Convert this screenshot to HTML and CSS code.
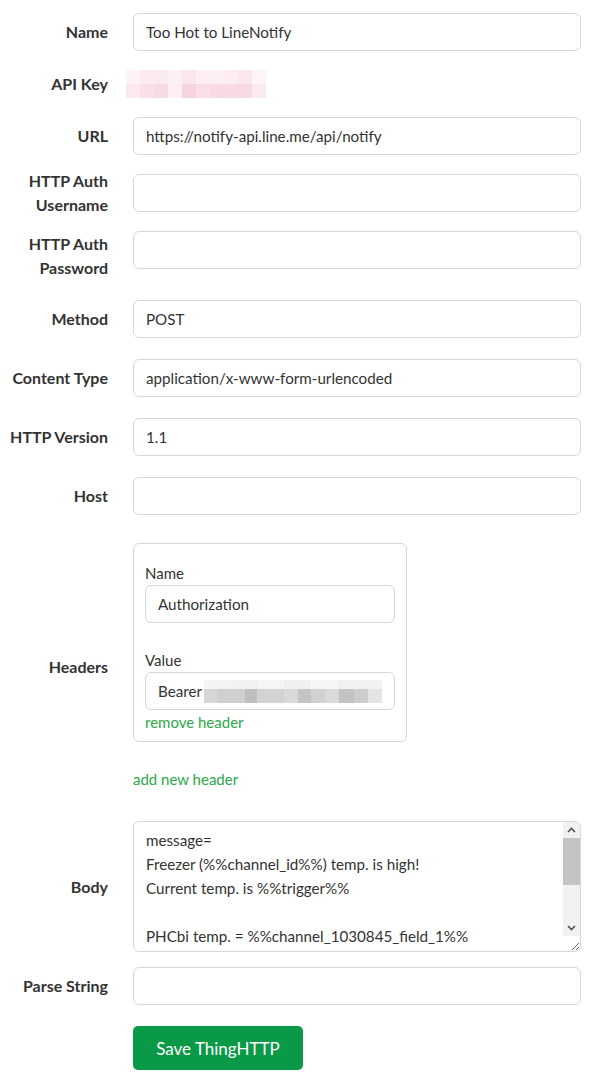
FILE: index.html
```
<!DOCTYPE html>
<html lang="en">
<head>
  <meta charset="UTF-8">
  <meta name="viewport" content="width=device-width, initial-scale=1.0">
  <title>ThingHTTP</title>
  <link rel="stylesheet" href="styles.css">
</head>
<body>
  <form id="thinghttpForm" class="form">
    <div class="row">
      <label class="label" for="nameInput">Name</label>
      <div class="field"><input type="text" id="nameInput" class="input" value="Too Hot to LineNotify"></div>
    </div>
    <div class="row">
      <span class="label">API Key</span>
      <div class="field">
        <div class="mosaic apiMosaic">
          <div class="mosaicRow pinkTop"></div>
          <div class="mosaicRow pinkBottom"></div>
        </div>
      </div>
    </div>
    <div class="row">
      <label class="label" for="urlInput">URL</label>
      <div class="field"><input type="text" id="urlInput" class="input" value="https://notify-api.line.me/api/notify"></div>
    </div>
    <div class="row">
      <label class="label" for="authUser">HTTP Auth<br>Username</label>
      <div class="field"><input type="text" id="authUser" class="input"></div>
    </div>
    <div class="row">
      <label class="label" for="authPass">HTTP Auth<br>Password</label>
      <div class="field fieldPad"><input type="password" id="authPass" class="input"></div>
    </div>
    <div class="row gap21">
      <label class="label" for="methodInput">Method</label>
      <div class="field"><input type="text" id="methodInput" class="input" value="POST"></div>
    </div>
    <div class="row gap21">
      <label class="label" for="contentType">Content Type</label>
      <div class="field"><input type="text" id="contentType" class="input" value="application/x-www-form-urlencoded"></div>
    </div>
    <div class="row gap21">
      <label class="label" for="httpVersion">HTTP Version</label>
      <div class="field"><input type="text" id="httpVersion" class="input" value="1.1"></div>
    </div>
    <div class="row gap28">
      <label class="label" for="hostInput">Host</label>
      <div class="field"><input type="text" id="hostInput" class="input"></div>
    </div>
    <div class="row gap30">
      <span class="label">Headers</span>
      <div class="field">
        <div class="headerBox">
          <label class="subLabel" for="headerName">Name</label>
          <input type="text" id="headerName" class="input" value="Authorization">
          <label class="subLabel valueLabel">Value</label>
          <div class="input fakeInput">Bearer
            <span class="mosaic bearerMosaic">
              <span class="mosaicRow grayTop"></span>
              <span class="mosaicRow grayBottom"></span>
            </span>
          </div>
          <a href="#" class="link">remove header</a>
        </div>
        <a href="#" class="link addLink">add new header</a>
      </div>
    </div>
    <div class="row gap15">
      <label class="label" for="bodyInput">Body</label>
      <div class="field bodyField">
        <textarea id="bodyInput" class="input textarea">message=
Freezer (%%channel_id%%) temp. is high!
Current temp. is %%trigger%%

PHCbi temp. = %%channel_1030845_field_1%%



</textarea>
        <!-- classic scrollbar, drawn over the textarea -->
        <div class="scrollbar">
          <div class="scrollBtn">
            <svg width="9" height="6" viewBox="0 0 9 6"><path d="M1 5 L4.5 1.5 L8 5" fill="none" stroke="#505050" stroke-width="1.6"/></svg>
          </div>
          <div class="scrollTrack"><div class="scrollThumb"></div></div>
          <div class="scrollBtn">
            <svg width="9" height="6" viewBox="0 0 9 6"><path d="M1 1 L4.5 4.5 L8 1" fill="none" stroke="#505050" stroke-width="1.6"/></svg>
          </div>
        </div>
      </div>
    </div>
    <div class="row gap21">
      <label class="label" for="parseInput">Parse String</label>
      <div class="field"><input type="text" id="parseInput" class="input"></div>
    </div>
    <div class="row">
      <span class="label"></span>
      <div class="field"><button type="submit" class="button">Save ThingHTTP</button></div>
    </div>
  </form>
</body>
</html>
```

FILE: styles.css
```
body {
  background-color: #ffffff;
  color: #333333;
  font-family: 'Lato', sans-serif;
  font-size: 15px;
  margin: 0;
  padding: 13px 15px 0 0;
}
.form {
  display: flex;
  flex-direction: column;
}
.row {
  display: flex;
  align-items: center;
  gap: 25px;
  margin-bottom: 19px;
}
.gap21 {
  margin-bottom: 21px;
}
.gap28 {
  margin-bottom: 28px;
}
.gap30 {
  margin-bottom: 30px;
}
.gap15 {
  margin-bottom: 15px;
}
.label {
  width: 108px;
  height: 24px;
  flex-shrink: 0;
  display: flex;
  flex-direction: column;
  justify-content: center;
  text-align: right;
  font-size: 16px;
  font-weight: bold;
  line-height: 24px;
  color: #333333;
}
.field {
  flex: 1;
}
.fieldPad {
  padding-bottom: 12px;
}
.input {
  display: block;
  box-sizing: border-box;
  width: 100%;
  height: 38px;
  padding: 0 12px;
  border: 1px solid #d3d7de;
  border-radius: 6px;
  background-color: #ffffff;
  color: #333333;
  font-family: 'Lato', sans-serif;
  font-size: 15.2px;
}
.fakeInput {
  display: flex;
  align-items: center;
  white-space: nowrap;
  overflow: hidden;
}
.bodyField {
  position: relative;
}
.textarea {
  height: 131px;
  padding: 6px 30px 6px 12px;
  line-height: 24px;
  resize: vertical;
  overflow: hidden;
}
.scrollbar {
  position: absolute;
  top: 1px;
  right: 1px;
  width: 17px;
  height: 114px;
  display: flex;
  flex-direction: column;
  background-color: #f1f1f1;
  border-top-right-radius: 5px;
}
.scrollBtn {
  height: 16px;
  display: flex;
  align-items: center;
  justify-content: center;
}
.scrollTrack {
  flex: 1;
}
.scrollThumb {
  height: 47px;
  background-color: #c4c4c4;
}
.mosaic {
  display: flex;
  flex-direction: column;
}
.mosaicRow {
  display: block;
}
.apiMosaic {
  width: 140px;
  margin-left: -7px;
}
.apiMosaic .mosaicRow {
  height: 14px;
}
.pinkTop {
  background: linear-gradient(to right,
    #fdf3f7 0 10%, #fce9f1 10% 20%, #fceaf2 20% 30%, #fdf0f5 30% 40%, #fbe5ee 40% 50%,
    #fceef4 50% 60%, #fceef4 60% 70%, #fcedf3 70% 80%, #fbe6ef 80% 90%, #fdf4f8 90% 100%);
}
.pinkBottom {
  background: linear-gradient(to right,
    #fbe8f0 0 10%, #f9dfea 10% 20%, #f8d9e6 20% 30%, #fcf0f5 30% 40%, #f7d3e2 40% 50%,
    #f9dde8 50% 60%, #f8d9e5 60% 70%, #f8d9e5 70% 80%, #f8dae6 80% 90%, #fbebf1 90% 100%);
}
.bearerMosaic {
  width: 188px;
  margin-left: 2px;
}
.grayTop {
  height: 9px;
  background: linear-gradient(to right,
    #f4f4f4 0 15%, #f1f1f1 15% 30%, #f5f5f5 30% 45%, #f0f0f0 45% 60%, #f6f6f6 60% 75%, #f2f2f2 75% 100%);
}
.grayBottom {
  height: 14px;
  background: linear-gradient(to right,
    #d6d6d6 0 8%, #cfcfcf 8% 23%, #bfbfbf 23% 30%, #d3d3d3 30% 45%, #d9d9d9 45% 53%,
    #c4c4c4 53% 60%, #d1d1d1 60% 68%, #dadada 68% 76%, #c3c3c3 76% 84%, #cdcdcd 84% 92%, #e4e4e4 92% 100%);
}
.headerBox {
  width: 274px;
  box-sizing: border-box;
  padding: 17px 11px 7px 11px;
  border: 1px solid #d3d7de;
  border-radius: 6px;
}
.subLabel {
  display: block;
  line-height: 24px;
}
.valueLabel {
  margin-top: 25px;
}
.link {
  display: block;
  line-height: 24px;
  color: #2ba84a;
  text-decoration: none;
}
.addLink {
  margin-top: 25px;
}
.button {
  width: 170px;
  height: 44px;
  border: none;
  border-radius: 5px;
  background-color: #0a9a47;
  color: #ffffff;
  font-family: 'Lato', sans-serif;
  font-size: 17px;
  cursor: pointer;
}
```
